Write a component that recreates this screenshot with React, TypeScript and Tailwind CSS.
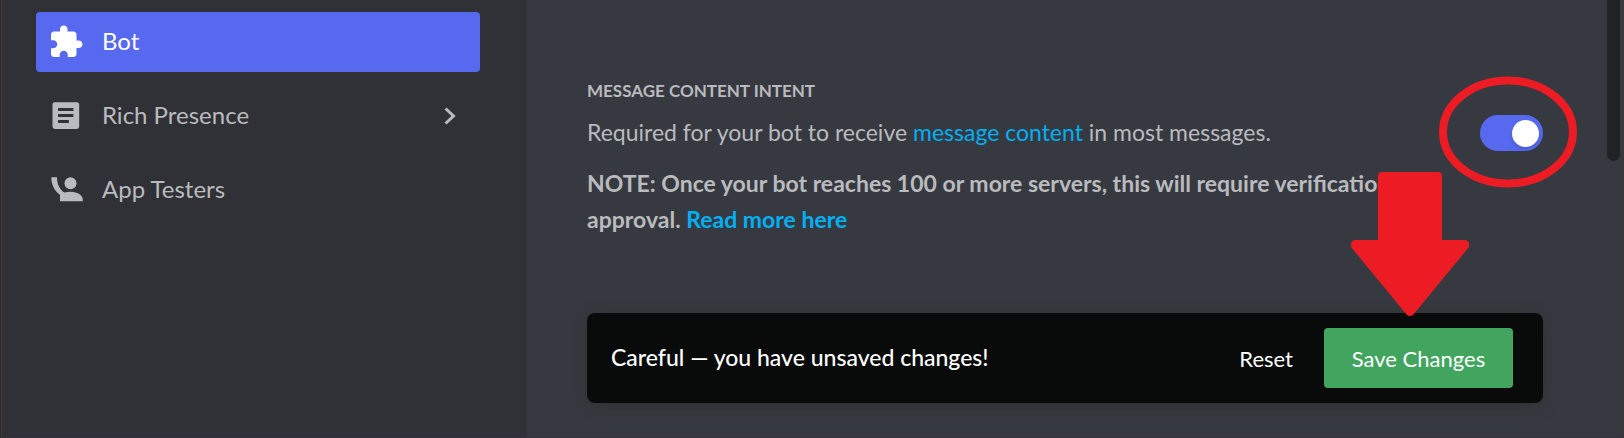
import type { ReactNode } from "react";

function PuzzleIcon() {
  return (
    <svg viewBox="0 0 24 24" className="size-9 shrink-0" fill="currentColor" aria-hidden="true">
      <path d="M20.5 11H19V7c0-1.1-.9-2-2-2h-4V3.5C13 2.12 11.88 1 10.500 1S8 2.120 8 3.500V5H4c-1.100 0-1.990.9-1.990 2v3.800H3.500c1.490 0 2.700 1.210 2.700 2.700s-1.210 2.700-2.700 2.700H2V20c0 1.100.9 2 2 2h3.800v-1.500c0-1.490 1.210-2.700 2.700-2.700 1.490 0 2.700 1.210 2.700 2.700V22H17c1.100 0 2-.9 2-2v-4h1.500c1.380 0 2.500-1.120 2.500-2.500S21.880 11 20.500 11z" />
    </svg>
  );
}

function ArticleIcon() {
  return (
    <svg viewBox="0 0 24 24" className="size-9 shrink-0" fill="currentColor" aria-hidden="true">
      <path
        fillRule="evenodd"
        d="M4.600 2.800h14.600a1.600 1.600 0 0 1 1.600 1.600v14.600a1.600 1.600 0 0 1-1.600 1.600H4.600A1.600 1.600 0 0 1 3 19V4.400a1.600 1.600 0 0 1 1.600-1.600zM6.700 6.700v2h10.200v-2zM6.700 10.700v2h10.200v-2zM6.700 14.700v2h7.200v-2z"
      />
    </svg>
  );
}

function TesterIcon() {
  return (
    <svg viewBox="0 0 24 24" className="size-9 shrink-0" fill="currentColor" aria-hidden="true">
      <circle cx="15" cy="7.500" r="4" />
      <path d="M2.200 3.500H6c0 4.600 1.800 8.400 5 10.200 1.200-.3 2.600-.5 4-.5 4.600 0 8.200 2.400 8.200 5.300v1H8v-4.300C4.300 12.600 2.200 8.400 2.200 3.500z" />
    </svg>
  );
}

function ChevronIcon() {
  return (
    <svg viewBox="0 0 12 18" className="h-[18px] w-3" fill="none" stroke="currentColor" strokeWidth="3" aria-hidden="true">
      <path d="M1.500 1.500 9.500 9l-8 7.500" />
    </svg>
  );
}

function NavItem({ icon, label, active, expandable }: { icon: ReactNode; label: string; active?: boolean; expandable?: boolean }) {
  return (
    <a
      href="#"
      aria-current={active ? "page" : undefined}
      className={
        active
          ? "flex h-[60px] items-center gap-[18px] rounded bg-[#5669ef] pr-6 pl-3 text-2xl text-white"
          : "flex h-[60px] items-center gap-[18px] rounded pr-6 pl-3 text-2xl text-[#b9bbbe]"
      }
    >
      {icon}
      <span className="flex-1 pb-[3px]">{label}</span>
      {expandable && <ChevronIcon />}
    </a>
  );
}

export default function App() {
  return (
    <div className="relative flex min-h-screen border-r border-b border-l border-r-[#49332f] border-b-[#38313f] border-l-[#2b2c30] bg-[#373940] font-[Lato,sans-serif] text-[#b9bbbe]">
      <nav className="w-[526px] shrink-0 border-l border-[#49332c] bg-[#303136] pt-3 pr-[47px] pl-[34px]">
        <div className="flex flex-col gap-[14px]">
          <NavItem active icon={<PuzzleIcon />} label="Bot" />
          <NavItem expandable icon={<ArticleIcon />} label="Rich Presence" />
          <NavItem icon={<TesterIcon />} label="App Testers" />
        </div>
      </nav>

      <main className="min-w-0 flex-1 pt-[76px] pr-20 pb-[34px] pl-[60px]">
        <section className="flex items-start justify-between">
          <div className="w-[850px]">
            <h2 className="text-[17px] leading-[30px] font-bold">MESSAGE CONTENT INTENT</h2>
            <p className="mt-2 text-[23px] leading-9">
              Required for your bot to receive <a href="#" className="text-[#00aff4]">message content</a> in most messages.
            </p>
            <p className="mt-[15px] mb-px text-[23px] leading-9 font-bold">
              NOTE: Once your bot reaches 100 or more servers, this will require verification &amp; approval.{" "}
              <a href="#" className="text-[#00aff4]">Read more here</a>
            </p>
          </div>
          <label className="relative mt-[39px] flex h-9 w-[63px] shrink-0 items-center justify-end rounded-full bg-[#5669ef] pr-1">
            <input type="checkbox" defaultChecked aria-label="Message Content Intent" className="absolute inset-0 opacity-0" />
            <span className="size-[27px] rounded-full bg-white shadow-md" />
            <svg viewBox="0 0 138 112" className="pointer-events-none absolute -top-[39px] -left-[41px] h-28 w-[138px]" fill="none" aria-hidden="true">
              <ellipse cx="69" cy="56" rx="65" ry="51.500" stroke="#ed1c24" strokeWidth="8" />
            </svg>
          </label>
        </section>

        <div className="relative mt-[75px] flex h-[90px] items-center rounded-lg bg-[#090b0a] pr-[30px] pl-6 text-white shadow-[0_3px_15px_rgba(47,49,49,0.9)]">
          <p className="flex-1 pb-0.5 text-[23px] font-medium">Careful — you have unsaved changes!</p>
          <button type="button" className="mr-[31px] text-[22px]">Reset</button>
          <button type="button" className="h-[60px] w-[189px] rounded bg-[#42a55f] text-[22px]">Save Changes</button>
          <svg viewBox="0 0 118 144" className="pointer-events-none absolute -top-[141px] right-[74px] h-36 w-[118px]" fill="#ed1c24" aria-hidden="true">
            <path d="M31 0h56q4 0 4 4v64h22q5 0 5 4v3L62 143q-3 2-6 0L0 75v-2q0-5 5-5h22V4q0-4 4-4z" />
          </svg>
        </div>
      </main>
      <div className="absolute top-0 right-[3px] h-[161px] w-[13px] rounded-b-full bg-[#212226]" />
    </div>
  );
}
